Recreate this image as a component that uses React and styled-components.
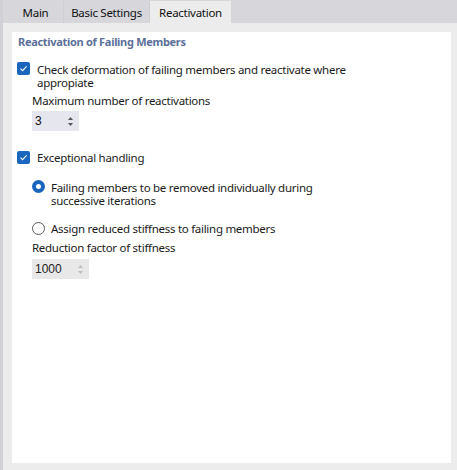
import React from "react"
import styled, { createGlobalStyle } from "styled-components"

const GlobalStyle = createGlobalStyle`
  html, body {
    margin: 0;
    padding: 0;
    background: #ececec;
  }
  body {
    font-family: "Noto Sans", "Open Sans", sans-serif;
    font-size: 11.5px;
    letter-spacing: -0.28px;
    color: #1a1a1a;
  }
`

const Window = styled.div`
  width: 457px;
  height: 470px;
  box-sizing: border-box;
  border-left: 3px solid #d0d0d6;
  display: flex;
  flex-direction: column;
  background: #ececec;
`

const TabBar = styled.div`
  height: 23px;
  flex: none;
  display: flex;
  align-items: flex-end;
  background: #d6d6db;
  padding-left: 5px;
`

const Tab = styled.div`
  width: ${(p) => p.$w}px;
  height: 22px;
  box-sizing: border-box;
  display: flex;
  align-items: center;
  justify-content: center;
  color: #111;
  background: ${(p) => (p.$active ? "#ececec" : "transparent")};
  border-right: ${(p) => (p.$active ? "none" : "1px solid #cfcfd4")};
`

const Body = styled.div`
  flex: 1;
  padding: 9px 6px 7px 9px;
  display: flex;
`

const Panel = styled.div`
  flex: 1;
  background: #fff;
  padding: 3px 6px 0 5px;
`

const Heading = styled.div`
  font-weight: 700;
  font-size: 11px;
  letter-spacing: -0.3px;
  line-height: 14px;
  color: #5b6f99;
  padding-left: 1px;
`

const Row = styled.div`
  display: flex;
  align-items: flex-start;
  gap: ${(p) => p.$gap || 7}px;
  margin-top: ${(p) => p.$mt || 0}px;
`

const Label = styled.div`
  line-height: 13px;
  max-width: ${(p) => p.$max || 400}px;
  margin-top: ${(p) => p.$mt || 0}px;
`

const Indent = styled.div`
  padding-left: 15px;
`

const Box = styled.span`
  width: 13px;
  height: 13px;
  flex: none;
  border-radius: 2px;
  background: #1a66bf;
  display: flex;
  align-items: center;
  justify-content: center;
`

const Radio = styled.span`
  width: 13px;
  height: 13px;
  flex: none;
  box-sizing: border-box;
  border-radius: 50%;
  background: ${(p) => (p.$on ? "#1a66bf" : "#fff")};
  border: ${(p) => (p.$on ? "none" : "1px solid #5a5a5a")};
  display: flex;
  align-items: center;
  justify-content: center;
  &::after {
    content: "";
    display: ${(p) => (p.$on ? "block" : "none")};
    width: 5px;
    height: 5px;
    border-radius: 50%;
    background: #fff;
  }
`

const Spin = styled.div`
  width: ${(p) => p.$w}px;
  height: 20px;
  margin-top: ${(p) => p.$mt}px;
  box-sizing: border-box;
  display: flex;
  align-items: center;
  justify-content: space-between;
  padding: 0 6px 0 3px;
  background: ${(p) => (p.$disabled ? "#e8e8e8" : "#e6e6ef")};
  color: ${(p) => (p.$disabled ? "#222" : "#111")};
  font-family: "Liberation Sans", Arial, sans-serif;
  font-size: 12px;
  letter-spacing: 0;
`

const Arrows = styled.span`
  display: flex;
  flex-direction: column;
  gap: 3px;
  color: ${(p) => (p.$disabled ? "#bdbdbd" : "#555")};
`

const Check = () => (
  <Box>
    <svg width="9" height="9" viewBox="0 0 9 9">
      <path d="M1.5 4.6 L3.6 6.6 L7.6 2.4" fill="none" stroke="#fff" strokeWidth="1.1" />
    </svg>
  </Box>
)

const SpinArrows = ({ disabled }) => (
  <Arrows $disabled={disabled}>
    <svg width="5" height="3" viewBox="0 0 5 3">
      <path d="M0 3 L2.5 0 L5 3 Z" fill="currentColor" />
    </svg>
    <svg width="5" height="3" viewBox="0 0 5 3">
      <path d="M0 0 L2.5 3 L5 0 Z" fill="currentColor" />
    </svg>
  </Arrows>
)

export default function App() {
  return (
    <>
      <GlobalStyle />
      <Window>
        <TabBar>
          <Tab $w={56}>Main</Tab>
          <Tab $w={86}>Basic Settings</Tab>
          <Tab $w={81} $active>Reactivation</Tab>
        </TabBar>
        <Body>
          <Panel>
            <Heading>Reactivation of Failing Members</Heading>

            <Row $mt={13}>
              <Check />
              <Label $mt={1} $max={312}>
                Check deformation of failing members and reactivate where appropiate
              </Label>
            </Row>
            <Indent>
              <Label $mt={5}>Maximum number of reactivations</Label>
              <Spin $w={47} $mt={4}>
                3
                <SpinArrows />
              </Spin>
            </Indent>

            <Row $mt={20}>
              <Check />
              <Label>Exceptional handling</Label>
            </Row>
            <Indent>
              <Row $mt={16} $gap={6}>
                <Radio $on />
                <Label $mt={1} $max={265}>
                  Failing members to be removed individually during successive iterations
                </Label>
              </Row>
              <Row $mt={15} $gap={6}>
                <Radio />
                <Label>Assign reduced stiffness to failing members</Label>
              </Row>
              <Label $mt={6}>Reduction factor of stiffness</Label>
              <Spin $w={57} $mt={5} $disabled>
                1000
                <SpinArrows disabled />
              </Spin>
            </Indent>
          </Panel>
        </Body>
      </Window>
    </>
  )
}
